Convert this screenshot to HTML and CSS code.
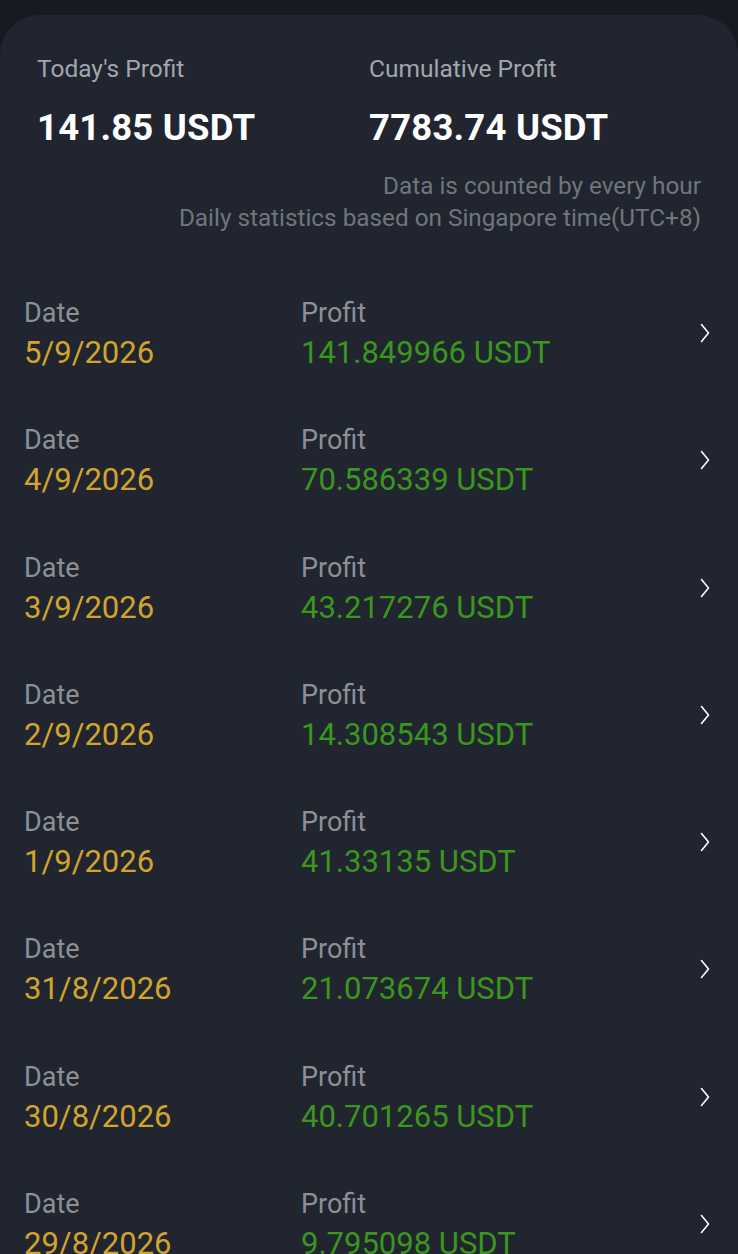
FILE: index.html
```html
<!DOCTYPE html>
<html lang="en">
<head>
  <meta charset="UTF-8">
  <meta name="viewport" content="width=device-width, initial-scale=1.0">
  <title>Profit</title>
  <link rel="stylesheet" href="styles.css">
</head>
<body>
  <div class="sheet">
    <div class="summary">
      <div class="stat">
        <div class="stat-label">Today's Profit</div>
        <div class="stat-value">141.85 USDT</div>
      </div>
      <div class="stat">
        <div class="stat-label">Cumulative Profit</div>
        <div class="stat-value">7783.74 USDT</div>
      </div>
    </div>
    <div class="note">
      <div>Data is counted by every hour</div>
      <div>Daily statistics based on Singapore time(UTC+8)</div>
    </div>

    <ul class="list">
      <li class="row">
        <div class="col-date"><div class="lbl">Date</div><div class="date">5/9/2026</div></div>
        <div class="col-profit"><div class="lbl">Profit</div><div class="profit">141.849966 USDT</div></div>
        <svg class="chev" viewBox="0 0 10 20"><path d="M1.5 1.5l7 8.5-7 8.5"/></svg>
      </li>
      <li class="row">
        <div class="col-date"><div class="lbl">Date</div><div class="date">4/9/2026</div></div>
        <div class="col-profit"><div class="lbl">Profit</div><div class="profit">70.586339 USDT</div></div>
        <svg class="chev" viewBox="0 0 10 20"><path d="M1.5 1.5l7 8.5-7 8.5"/></svg>
      </li>
      <li class="row">
        <div class="col-date"><div class="lbl">Date</div><div class="date">3/9/2026</div></div>
        <div class="col-profit"><div class="lbl">Profit</div><div class="profit">43.217276 USDT</div></div>
        <svg class="chev" viewBox="0 0 10 20"><path d="M1.5 1.5l7 8.5-7 8.5"/></svg>
      </li>
      <li class="row">
        <div class="col-date"><div class="lbl">Date</div><div class="date">2/9/2026</div></div>
        <div class="col-profit"><div class="lbl">Profit</div><div class="profit">14.308543 USDT</div></div>
        <svg class="chev" viewBox="0 0 10 20"><path d="M1.5 1.5l7 8.5-7 8.5"/></svg>
      </li>
      <li class="row">
        <div class="col-date"><div class="lbl">Date</div><div class="date">1/9/2026</div></div>
        <div class="col-profit"><div class="lbl">Profit</div><div class="profit">41.33135 USDT</div></div>
        <svg class="chev" viewBox="0 0 10 20"><path d="M1.5 1.5l7 8.5-7 8.5"/></svg>
      </li>
      <li class="row">
        <div class="col-date"><div class="lbl">Date</div><div class="date">31/8/2026</div></div>
        <div class="col-profit"><div class="lbl">Profit</div><div class="profit">21.073674 USDT</div></div>
        <svg class="chev" viewBox="0 0 10 20"><path d="M1.5 1.5l7 8.5-7 8.5"/></svg>
      </li>
      <li class="row">
        <div class="col-date"><div class="lbl">Date</div><div class="date">30/8/2026</div></div>
        <div class="col-profit"><div class="lbl">Profit</div><div class="profit">40.701265 USDT</div></div>
        <svg class="chev" viewBox="0 0 10 20"><path d="M1.5 1.5l7 8.5-7 8.5"/></svg>
      </li>
      <li class="row">
        <div class="col-date"><div class="lbl">Date</div><div class="date">29/8/2026</div></div>
        <div class="col-profit"><div class="lbl">Profit</div><div class="profit">9.795098 USDT</div></div>
        <svg class="chev" viewBox="0 0 10 20"><path d="M1.5 1.5l7 8.5-7 8.5"/></svg>
      </li>
    </ul>
  </div>
</body>
</html>
```

FILE: styles.css
```css
html, body {
  margin: 0;
  padding: 0;
  height: 100%;
  overflow: hidden;
}
body {
  font-family: Roboto, "Liberation Sans", Arial, sans-serif;
  background-color: #161b23;
  color: white;
  padding-top: 15px;
}
.sheet {
  background-color: #20252f;
  border-radius: 40px 40px 0 0;
  min-height: 1300px;
}
.summary {
  display: flex;
  padding: 40px 0 0 37px;
}
.stat {
  width: 332px;
}
.stat-label {
  font-size: 24.5px;
  line-height: 28px;
  color: #a2a6ad;
}
.stat-value {
  font-size: 36.5px;
  line-height: 42px;
  font-weight: bold;
  margin-top: 24px;
  letter-spacing: 0.2px;
}
.note {
  text-align: right;
  padding: 21px 37px 0 0;
  font-size: 24.3px;
  line-height: 32px;
  color: #70757d;
}
.list {
  list-style: none;
  margin: 0;
  padding: 63px 24px 0 24px;
}
.row {
  display: flex;
  align-items: flex-start;
  height: 127.3px;
}
.col-date {
  width: 277px;
}
.col-profit {
  flex: 1;
}
.lbl {
  font-size: 27px;
  line-height: 32px;
  color: #8c9097;
}
.date, .profit {
  font-size: 31px;
  line-height: 36px;
  margin-top: 6px;
}
.date {
  color: #d3a42c;
}
.profit {
  color: #3b961d;
}
.chev {
  width: 10px;
  height: 20px;
  margin: 26px 4px 0 0;
  fill: none;
  stroke: #ffffff;
  stroke-width: 1.6;
  stroke-linecap: round;
  stroke-linejoin: round;
}
```
